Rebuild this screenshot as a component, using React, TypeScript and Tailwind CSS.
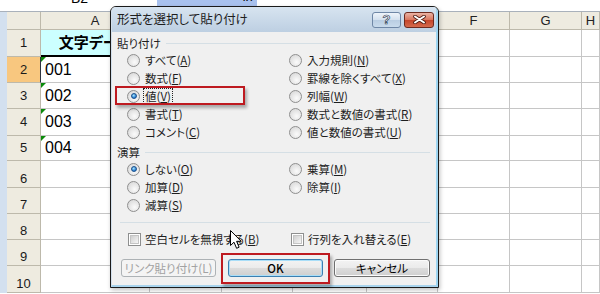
import React from "react";

const JP = "font-['Noto_Sans_CJK_JP','Noto_Sans_CJK_SC',sans-serif] [font-feature-settings:'palt']";

const colWidths = ["w-[109px]", "w-[72px]", "w-[71px]", "w-[74px]", "w-[71px]", "w-[72px]", "w-[72px]", "flex-1"];
const colNames = ["A", "B", "C", "D", "E", "F", "G", "H"];

const rows = [
  { n: 1, h: "h-[27px]" },
  { n: 2, h: "h-[26px]" },
  { n: 3, h: "h-[26px]" },
  { n: 4, h: "h-[27px]" },
  { n: 5, h: "h-[25px]" },
  { n: 6, h: "h-[27px]" },
  { n: 7, h: "h-[26px]" },
  { n: 8, h: "h-[26px]" },
  { n: 9, h: "h-[26px]" },
  { n: 10, h: "h-[27px]" },
];

const values: Record<number, string> = { 2: "001", 3: "002", 4: "003", 5: "004" };

function Sheet() {
  return (
    <div className="flex flex-col">
      {/* formula bar remnant */}
      <div className="flex h-[12px] overflow-hidden border-b border-[#a9b1bb] bg-white">
        <div className="w-[157px]">
          <span className="-mt-[9px] block pl-[71px] text-[14px] leading-[14px]">B2</span>
        </div>
        <div className="h-[6px] w-[100px] overflow-hidden bg-[#a8c1ee]">
          <span className="-mt-[10px] block pl-[86px] text-[13px] italic leading-[14px]">fx</span>
        </div>
        <div className="flex-1" />
      </div>

      {/* column headers */}
      <div className="flex h-[18px]">
        <div className="w-[7px] bg-[#d3e0ef]" />
        <div className="w-[34px] border-r border-b border-[#bdb9ab] bg-[#eeebe0]" />
        {colNames.map((c, i) => (
          <div
            key={c}
            className={`${colWidths[i]} flex items-center justify-center border-r border-b border-[#bdb9ab] bg-[#eeebe0] text-[13px] text-[#222]`}
          >
            {c}
          </div>
        ))}
      </div>

      {rows.map((r) => (
        <div key={r.n} className={`flex ${r.h}`}>
          <div className="w-[7px] bg-[#d3e0ef]" />
          <div
            className={`flex w-[34px] justify-center border-b text-[13px] text-[#1a1a1a] ${
              r.n <= 5 ? "items-center" : "items-end leading-[16px]"
            } ${
              r.n === 2
                ? "border-r border-r-[#2d3440] border-b-[#bdb9ab] bg-[#f8c77f]"
                : "border-r border-[#bdb9ab] bg-[#eeebe0]"
            }`}
          >
            {r.n}
          </div>
          {colNames.map((c, i) => {
            if (i === 0 && r.n === 1) {
              return (
                <div
                  key={c}
                  className={`${colWidths[i]} flex items-center justify-center border-r border-r-[#c6c6c6] border-b-2 border-b-black bg-[#ccffff] text-[15px] font-bold ${JP}`}
                >
                  文字データ
                </div>
              );
            }
            if (i === 0 && values[r.n]) {
              return (
                <div
                  key={c}
                  className={`${colWidths[i]} relative flex items-center border-r border-b border-[#c6c6c6] pl-[4px] text-[16px] text-black`}
                >
                  <span className="absolute top-0 left-0 h-0 w-0 border-t-[5px] border-r-[5px] border-t-[#0a8a0a] border-r-transparent" />
                  {values[r.n]}
                </div>
              );
            }
            return <div key={c} className={`${colWidths[i]} border-r border-b border-[#c6c6c6]`} />;
          })}
        </div>
      ))}
    </div>
  );
}

function Radio({ checked }: { checked?: boolean }) {
  return (
    <span className="flex h-[13px] w-[13px] shrink-0 items-center justify-center rounded-full border border-[#8f8f8f] bg-[radial-gradient(circle_at_60%_65%,#fbfbfb,#d2d2d2)]">
      {checked && (
        <span className="h-[6px] w-[6px] rounded-full border border-[#1a4f8a] bg-[radial-gradient(circle_at_40%_35%,#a6e6ff,#2379cf_70%)]" />
      )}
    </span>
  );
}

function Check() {
  return (
    <span className="flex h-[13px] w-[13px] shrink-0 items-center justify-center border border-[#8e8f8f] bg-white">
      <span className="h-[9px] w-[9px] border border-[#c4c4c4] bg-gradient-to-br from-[#cfcfcf] to-[#f6f6f6]" />
    </span>
  );
}

function Label({ text, k }: { text: string; k: string }) {
  return (
    <span className="whitespace-nowrap">
      {text}(<u className="underline-offset-[1px]">{k}</u>)
    </span>
  );
}

type Opt = { text: string; k: string; checked?: boolean; focus?: boolean } | null;

const pasteOpts: Opt[] = [
  { text: "すべて", k: "A" },
  { text: "入力規則", k: "N" },
  { text: "数式", k: "F" },
  { text: "罫線を除くすべて", k: "X" },
  { text: "値", k: "V", checked: true, focus: true },
  { text: "列幅", k: "W" },
  { text: "書式", k: "T" },
  { text: "数式と数値の書式", k: "R" },
  { text: "コメント", k: "C" },
  { text: "値と数値の書式", k: "U" },
];

const opOpts: Opt[] = [
  { text: "しない", k: "O", checked: true },
  { text: "乗算", k: "M" },
  { text: "加算", k: "D" },
  { text: "除算", k: "I" },
  { text: "減算", k: "S" },
  null,
];

function OptionGrid({ opts }: { opts: Opt[] }) {
  return (
    <div className="grid grid-cols-[162px_1fr] pl-[15px]">
      {opts.map((o, i) =>
        o ? (
          <div key={i} className="flex h-[18px] items-center gap-[5px]">
            <Radio checked={o.checked} />
            {o.focus ? (
              <span className="-ml-[2px] border border-dotted border-[#222] px-[1px] leading-[14px]">
                <Label text={o.text} k={o.k} />
              </span>
            ) : (
              <Label text={o.text} k={o.k} />
            )}
          </div>
        ) : (
          <div key={i} />
        )
      )}
    </div>
  );
}

function GroupTitle({ label, className = "" }: { label: string; className?: string }) {
  return (
    <div className={`flex h-[16px] items-center pr-[6px] pl-[5px] ${className}`}>
      <span>{label}</span>
      <span className="ml-[5px] h-px flex-1 bg-[#d5dfe5]" />
    </div>
  );
}

const btnFace = "bg-[linear-gradient(#f3f3f3_0%,#ebebeb_48%,#dcdcdc_52%,#cfcfcf_100%)]";

function Dialog() {
  return (
    <div className="absolute top-[6px] left-[110px] h-[282px] w-[329px] overflow-hidden rounded-t-[6px] border border-[#1a1a1a] bg-[#f0f0f0] shadow-[1px_2px_4px_rgba(0,0,0,0.25)]">
      <div className="flex h-full flex-col rounded-t-[5px] border-l border-r-2 border-b-2 border-l-[#d2dfec] border-r-[#9ed5f1] border-b-[#a8d3ec]">
        {/* title bar */}
        <div className="flex h-[25px] shrink-0 items-center bg-gradient-to-b from-[#d7e4f0] to-[#bdcfe2] pr-[2px] pl-[5px]">
          <span className={`text-[12.5px] text-[#1e1e1e] ${JP}`}>形式を選択して貼り付け</span>
          <div className="ml-auto flex gap-[3px]">
            <div className="flex h-[16px] w-[29px] items-center justify-center rounded-[3px] border border-[#6f87a6] bg-[linear-gradient(#eef4fa_0%,#d3e0ee_50%,#b9cde2_52%,#c9dbec_100%)]">
              <span className="text-[13px] leading-none font-bold text-white [-webkit-text-stroke:0.7px_#34465c]">?</span>
            </div>
            <div className="flex h-[16px] w-[30px] items-center justify-center rounded-[3px] border border-[#6e2b1f] bg-[linear-gradient(#eab3a4_0%,#d9775f_48%,#c5462b_52%,#d46a4d_100%)]">
              <svg width="13" height="9" viewBox="0 0 13 9">
                <path d="M2 1.5 L11 7.5 M11 1.5 L2 7.5" stroke="#4a1a12" strokeWidth="3.6" strokeLinecap="round" />
                <path d="M2 1.5 L11 7.5 M11 1.5 L2 7.5" stroke="#ffffff" strokeWidth="2" strokeLinecap="round" />
              </svg>
            </div>
          </div>
        </div>

        {/* body */}
        <div className={`flex flex-col pt-[3px] text-[11.5px] leading-[16px] text-[#1e1e1e] ${JP}`}>
          <GroupTitle label="貼り付け" />
          <OptionGrid opts={pasteOpts} />
          <GroupTitle label="演算" className="mt-[3px]" />
          <OptionGrid opts={opOpts} />
          <div className="mt-[8px] mr-[6px] ml-[8px] h-px bg-[#d5dfe5]" />
          <div className="mt-[8px] grid h-[16px] grid-cols-[163px_1fr] pl-[16px]">
            <div className="flex items-center gap-[4px]">
              <Check />
              <Label text="空白セルを無視する" k="B" />
            </div>
            <div className="flex items-center gap-[4px]">
              <Check />
              <Label text="行列を入れ替える" k="E" />
            </div>
          </div>
          <div className="mt-[12px] flex gap-[12px] pl-[9px]">
            <div className="flex h-[18px] w-[95px] items-center justify-center rounded-[3px] border border-[#adb2b5] bg-[#f4f4f4] text-[#a2a2a2]">
              リンク貼り付け(L)
            </div>
            <div
              className={`flex h-[18px] w-[95px] items-center justify-center rounded-[3px] border border-[#3c7fb1] ${btnFace} font-medium text-black shadow-[inset_0_0_0_1px_#a9def8]`}
            >
              OK
            </div>
            <div
              className={`-ml-[1px] flex h-[18px] w-[96px] items-center justify-center rounded-[3px] border border-[#707070] ${btnFace} text-black shadow-[inset_0_0_0_1px_#fbfbfb]`}
            >
              キャンセル
            </div>
          </div>
        </div>
      </div>
    </div>
  );
}

export default function App() {
  return (
    <div className="relative h-[294px] w-[600px] overflow-hidden bg-white font-['Liberation_Sans',Arial,sans-serif]">
      <Sheet />
      <Dialog />

      {/* red highlight frames */}
      <div className="absolute top-[86px] left-[115px] h-[19px] w-[130px] border-2 border-[#be1a20] shadow-[2px_3px_3px_rgba(0,0,0,0.3)]" />
      <div className="absolute top-[253px] left-[221px] h-[31px] w-[109px] border-2 border-[#be1a20] shadow-[2px_3px_3px_rgba(0,0,0,0.3)]" />

      {/* mouse pointer */}
      <svg className="absolute top-[230px] left-[230px]" width="13" height="20" viewBox="0 0 13 20">
        <path
          d="M0.5 0.5 L0.5 15.5 L4 12.2 L6.6 18.3 L9.1 17.2 L6.6 11.3 L11.2 11.3 Z"
          fill="#ffffff"
          stroke="#000000"
          strokeWidth="1"
          strokeLinejoin="round"
        />
      </svg>
    </div>
  );
}
